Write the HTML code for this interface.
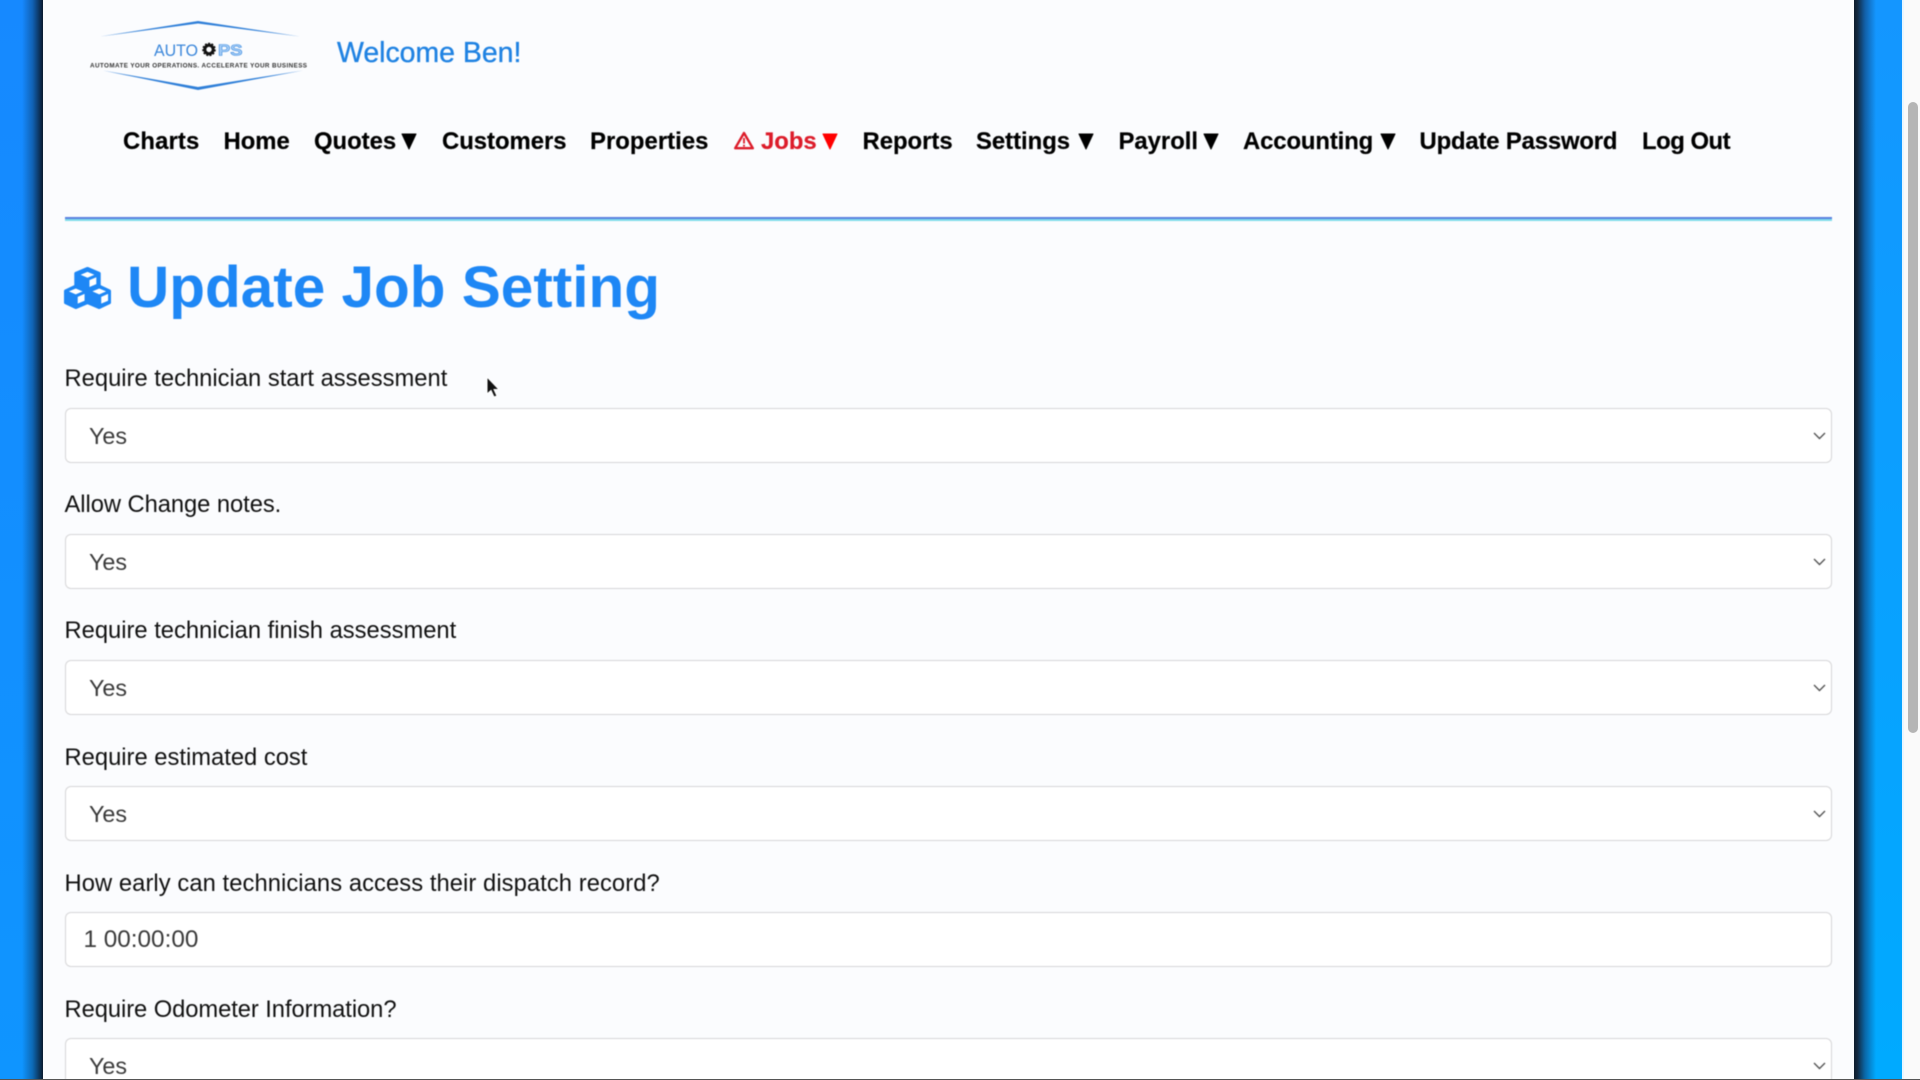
<!DOCTYPE html>
<html lang="en">
<head>
<meta charset="utf-8">
<title>Update Job Setting</title>
<style>
html,body{margin:0;padding:0;width:1920px;height:1080px;overflow:hidden;background:#fafafa;font-family:"Liberation Sans",sans-serif;}
#root{position:relative;width:1920px;height:1080px;overflow:hidden;}
#bgl{position:absolute;left:0;top:0;width:43px;height:1080px;background:linear-gradient(#1689ff,#0f95ff);}
#bgl:after{content:"";position:absolute;left:22px;top:0;width:21px;height:100%;background:linear-gradient(90deg,rgba(8,25,45,0),rgba(8,25,45,.35) 50%,#0a1a2e 100%);}
#bgr{position:absolute;left:1854px;top:0;width:48px;height:1080px;background:linear-gradient(#1496ff,#00aaff);}
#bgr:after{content:"";position:absolute;left:0;top:0;width:22px;height:100%;background:linear-gradient(90deg,#0e1c2c 0,#12283f 15%,rgba(16,60,110,.6) 50%,rgba(16,90,160,0) 100%);}
#edge{position:absolute;left:1902px;top:0;width:2px;height:1080px;background:#e8f6ff;}
#thumb{position:absolute;left:1908px;top:102px;width:10px;height:631px;border-radius:5px;background:#b5b5b5;}
#panel{position:absolute;left:43px;top:0;width:1811px;height:1080px;background:#fbfcfe;}
#content{position:absolute;left:0;top:0;width:1920px;height:1080px;overflow:hidden;filter:blur(.45px);}
#welcome{position:absolute;left:337px;top:37px;font-size:28.45px;line-height:32px;color:#1f82e2;white-space:nowrap;-webkit-text-stroke:.35px #1f82e2;}
nav a{position:absolute;top:128px;font-size:23.85px;line-height:28px;font-weight:700;color:#000;white-space:nowrap;text-decoration:none;-webkit-text-stroke:.2px #000;}
nav a.r{color:#dc1c2a;-webkit-text-stroke:.2px #dc1c2a;}
.ar{position:absolute;top:133px;}
#hr1{position:absolute;left:65px;top:217px;width:1767px;height:2px;background:#5a80e0;}
#hr2{position:absolute;left:65px;top:219px;width:1767px;height:1.5px;background:#7fdcea;}
h1{position:absolute;margin:0;left:127px;top:254px;font-size:58.5px;line-height:68px;font-weight:700;color:#1e87f5;white-space:nowrap;}
label{position:absolute;left:64.5px;font-size:23.75px;line-height:28px;color:#111;white-space:nowrap;}
.f{position:absolute;left:65px;width:1767px;height:55px;box-sizing:border-box;border:1.5px solid #d6d6d8;border-radius:6px;background:#fff;font:23.3px "Liberation Sans",sans-serif;color:#3a3a3a;appearance:none;-webkit-appearance:none;outline:0;margin:0;}
select.f{padding:0 0 0 23px;}
input.f{padding:1px 0 0 17.5px;font-size:24.3px;}
.chev{position:absolute;left:1813px;width:13px;height:8px;}
#botline{position:absolute;left:0;top:1079px;width:1920px;height:1px;background:#555;}
</style>
</head>
<body>
<div id="root">
<div id="bgl"></div><div id="panel"></div><div id="bgr"></div><div id="edge"></div><div id="thumb"></div>
<div id="content">
<svg style="position:absolute;left:0;top:0" width="340" height="100" viewBox="0 0 340 100">
  <polygon points="100,36.5 198,21 300,36.5 198,23.5" fill="#2f7fd8"/>
  <polygon points="103,70.5 198,87 303,70.5 198,90" fill="#2f7fd8"/>
  <text x="154" y="56" font-family="Liberation Sans" font-size="17" fill="#3a86da" textLength="44" lengthAdjust="spacingAndGlyphs">AUTO</text>
  <circle cx="209" cy="49.5" r="4.2" fill="none" stroke="#111" stroke-width="3"/>
  <circle cx="209" cy="49.5" r="6" fill="none" stroke="#111" stroke-width="1.6" stroke-dasharray="2 1.4"/>
  <text x="218" y="55.5" font-family="Liberation Sans" font-weight="700" font-size="15.5" fill="#a8cff7" stroke="#3f8ce0" stroke-width=".6" textLength="24.5" lengthAdjust="spacingAndGlyphs">PS</text>
  <text x="90" y="67.5" font-family="Liberation Sans" font-weight="700" font-size="6.3" fill="#333" textLength="217" lengthAdjust="spacing">AUTOMATE YOUR OPERATIONS. ACCELERATE YOUR BUSINESS</text>
</svg>
<div id="welcome">Welcome Ben!</div>
<nav>
  <a style="left:123px;letter-spacing:.15px">Charts</a>
  <a style="left:223.5px">Home</a>
  <a style="left:314px">Quotes</a>
  <svg class="ar" style="left:401px" width="16" height="17" viewBox="0 0 16 17"><path d="M1 1H15L8 16Z" fill="#000" stroke="#000" stroke-linejoin="round"/></svg>
  <a style="left:442px">Customers</a>
  <a style="left:590px;letter-spacing:.05px">Properties</a>
  <svg style="position:absolute;left:733.5px;top:131px" width="20" height="19" viewBox="0 0 20 19"><path d="M10 2L18.8 17.2H1.2Z" fill="none" stroke="#dc1c2a" stroke-width="2.4" stroke-linejoin="round"/><path d="M10 7V12.5M10 13.8V15.6" stroke="#dc1c2a" stroke-width="1.8"/></svg>
  <a class="r" style="left:761px">Jobs</a>
  <svg class="ar" style="left:822px" width="16" height="17" viewBox="0 0 16 17"><path d="M1 1H15L8 16Z" fill="#f00" stroke="#f00" stroke-linejoin="round"/></svg>
  <a style="left:862.5px">Reports</a>
  <a style="left:976px">Settings</a>
  <svg class="ar" style="left:1078px" width="16" height="17" viewBox="0 0 16 17"><path d="M1 1H15L8 16Z" fill="#000" stroke="#000" stroke-linejoin="round"/></svg>
  <a style="left:1118.5px">Payroll</a>
  <svg class="ar" style="left:1203px" width="16" height="17" viewBox="0 0 16 17"><path d="M1 1H15L8 16Z" fill="#000" stroke="#000" stroke-linejoin="round"/></svg>
  <a style="left:1243px;letter-spacing:-.1px">Accounting</a>
  <svg class="ar" style="left:1379.5px" width="16" height="17" viewBox="0 0 16 17"><path d="M1 1H15L8 16Z" fill="#000" stroke="#000" stroke-linejoin="round"/></svg>
  <a style="left:1419.5px;letter-spacing:-.15px">Update Password</a>
  <a style="left:1642px;letter-spacing:-.47px">Log Out</a>
</nav>
<div id="hr1"></div><div id="hr2"></div>
<svg style="position:absolute;left:64px;top:266px" width="47" height="44" viewBox="0 0 48 44">
  <g stroke="#1e87f5" stroke-width="3" stroke-linejoin="round">
    <path d="M24 2L36 7V20L24 25L12 20V7Z" fill="#1e87f5"/>
    <path d="M12 20L24 25V37L12 42L1.5 37V25Z" fill="#1e87f5"/>
    <path d="M36 20L46.5 25V37L36 42L24 37V25Z" fill="#1e87f5"/>
  </g>
  <g fill="#fff">
    <path d="M24 5.5L31 8.5L24 11.5L17 8.5Z"/><path d="M33 11V18L26 21V14Z"/>
    <path d="M12 22.5L19 25.5L12 28.5L5 25.5Z"/><path d="M21 28V35L14 38V31Z"/>
    <path d="M36 22.5L43 25.5L36 28.5L29 25.5Z"/><path d="M45 28V35L38 38V31Z"/>
  </g>
</svg>
<h1>Update Job Setting</h1>
<form>
<label style="top:365px">Require technician start assessment</label>
<select class="f" style="top:408px"><option>Yes</option></select>
<label style="top:491px;letter-spacing:-.06px">Allow Change notes.</label>
<select class="f" style="top:534px"><option>Yes</option></select>
<label style="top:617px;letter-spacing:-.01px">Require technician finish assessment</label>
<select class="f" style="top:660px"><option>Yes</option></select>
<label style="top:743.5px">Require estimated cost</label>
<select class="f" style="top:786px"><option>Yes</option></select>
<label style="top:870px;letter-spacing:.07px">How early can technicians access their dispatch record?</label>
<input class="f" style="top:912px" value="1 00:00:00">
<label style="top:996px;letter-spacing:-.07px">Require Odometer Information?</label>
<select class="f" style="top:1038px"><option>Yes</option></select>
</form>
<svg class="chev" style="top:432px" viewBox="0 0 13 8"><path d="M1 1L6.5 6.5L12 1" fill="none" stroke="#555" stroke-width="1.4"/></svg>
<svg class="chev" style="top:558px" viewBox="0 0 13 8"><path d="M1 1L6.5 6.5L12 1" fill="none" stroke="#555" stroke-width="1.4"/></svg>
<svg class="chev" style="top:684px" viewBox="0 0 13 8"><path d="M1 1L6.5 6.5L12 1" fill="none" stroke="#555" stroke-width="1.4"/></svg>
<svg class="chev" style="top:810px" viewBox="0 0 13 8"><path d="M1 1L6.5 6.5L12 1" fill="none" stroke="#555" stroke-width="1.4"/></svg>
<svg class="chev" style="top:1062px" viewBox="0 0 13 8"><path d="M1 1L6.5 6.5L12 1" fill="none" stroke="#555" stroke-width="1.4"/></svg>
<svg style="position:absolute;left:486px;top:376px" width="15" height="24" viewBox="0 0 15 24"><path d="M1 1V18L5 14.5L8 21L11 20L8 13.5H13Z" fill="#111" stroke="#fff" stroke-width="1"/></svg>
</div>
<div id="botline"></div>
</div>
</body>
</html>
